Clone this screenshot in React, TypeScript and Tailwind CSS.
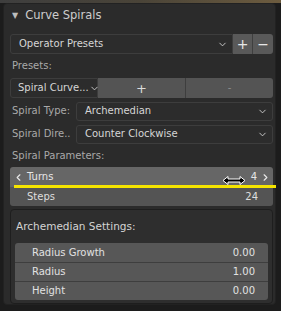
import { ChevronDown, ChevronLeft, ChevronRight } from 'lucide-react'

const font = { fontFamily: '"DejaVu Sans", "Liberation Sans", sans-serif' }

function Dropdown({ label, className = '' }: { label: string; className?: string }) {
    return (
        <div className={`flex items-center justify-between h-[19px] pl-2 pr-1 rounded-[3px] bg-[#2c2c2c] border border-[#3d3d3d] text-[#d6d6d6] ${className}`}>
            <span className="whitespace-nowrap">{label}</span>
            <ChevronDown size={11} strokeWidth={2} className="text-[#cfcfcf] shrink-0" />
        </div>
    )
}

function ValueRow({ label, value, top, bottom }: { label: string; value: string; top?: boolean; bottom?: boolean }) {
    return (
        <div className={`flex items-center justify-between h-[19px] pl-[17px] pr-[13px] bg-[#575757] text-[#e2e2e2] ${top ? 'rounded-t-[3px]' : 'border-t border-[#3e3e3e]'} ${bottom ? 'rounded-b-[3px]' : ''}`}>
            <span>{label}</span>
            <span>{value}</span>
        </div>
    )
}

export default function App() {
    return (
        <div className="w-[281px] h-[311px] overflow-hidden bg-[#1c1c1c] text-[10px] leading-none" style={font}>
            {/* top strip */}
            <div className="h-[3px] bg-gradient-to-r from-[#3e3e3e] via-[#4a4438] to-[#6d5c3f]" />

            {/* panel */}
            <div className="ml-[3px] mr-[5px] h-[302px] rounded-[4px] bg-[#2b2b2b] border border-[#222] flex flex-col">
                {/* header */}
                <div className="flex items-center h-[26px] pl-[8px] gap-[7px] text-[#cdcdcd] text-[11.5px]">
                    <span className="text-[8px] text-[#bdbdbd]">▼</span>
                    <span>Curve Spirals</span>
                </div>

                <div className="flex flex-col pl-[6px] pr-[2px] pt-[6px]">
                    {/* operator presets */}
                    <div className="flex h-[20px]">
                        <Dropdown label="Operator Presets" className="flex-1 h-[20px] rounded-r-none" />
                        <div className="w-[20px] flex items-center justify-center bg-[#595959] text-[#e6e6e6] text-[14px] border-r border-[#3f3f3f]">+</div>
                        <div className="w-[20px] flex items-center justify-center bg-[#595959] rounded-r-[3px] text-[#e6e6e6] text-[14px]">−</div>
                    </div>

                    <div className="h-[24px] flex items-center pl-[2px] text-[#a9a9a9]">Presets:</div>

                    <div className="flex h-[20px]">
                        <Dropdown label="Spiral Curve..." className="w-[88px] h-[20px] rounded-r-none pl-[7px]" />
                        <div className="flex-1 flex items-center justify-center bg-[#545454] text-[#dcdcdc] text-[13px] border-r border-[#3e3e3e]">+</div>
                        <div className="flex-1 flex items-center justify-center bg-[#545454] rounded-r-[3px] text-[#8c8c8c]">-</div>
                    </div>

                    <div className="flex items-center h-[20px] mt-[3px]">
                        <span className="w-[66px] pl-[2px] whitespace-nowrap text-[#a9a9a9]">Spiral Type:</span>
                        <Dropdown label="Archemedian" className="flex-1" />
                    </div>
                    <div className="flex items-center h-[20px] mt-[3px]">
                        <span className="w-[66px] pl-[2px] whitespace-nowrap text-[#a9a9a9]">Spiral Dire..</span>
                        <Dropdown label="Counter Clockwise" className="flex-1" />
                    </div>

                    <div className="h-[22px] flex items-center pl-[2px] mt-[1px] text-[#a9a9a9]">Spiral Parameters:</div>

                    {/* number fields */}
                    <div className="relative">
                        <div className="flex items-center h-[20px] bg-[#666666] rounded-t-[3px] text-[#e6e6e6] pl-[3px] pr-[2px]">
                            <ChevronLeft size={11} strokeWidth={2.5} className="text-[#e8e8e8]" />
                            <span className="ml-[3px] flex-1">Turns</span>
                            <span className="mr-[3px]">4</span>
                            <ChevronRight size={11} strokeWidth={2.5} className="text-[#e8e8e8]" />
                        </div>
                        <div className="flex items-center justify-between h-[19px] bg-[#545454] rounded-b-[3px] text-[#dedede] pl-[17px] pr-[15px]">
                            <span>Steps</span>
                            <span>24</span>
                        </div>
                        {/* yellow drag line + cursor */}
                        <div className="absolute left-[4px] right-[-3px] top-[18px] h-[3px] bg-[#f5e400]" />
                        <svg className="absolute left-[212px] top-[9px]" width="24" height="9" viewBox="0 0 24 9">
                            <path d="M1 4.5 L6 0.5 L6 3 L18 3 L18 0.5 L23 4.5 L18 8.5 L18 6 L6 6 L6 8.5 Z" fill="#000" stroke="#fff" strokeWidth="1" />
                        </svg>
                    </div>

                    {/* sub panel */}
                    <div className="mt-[3px] h-[95px] rounded-[4px] border border-[#1e1e1e] bg-[#2e2e2e] pl-[4px] pr-[4px]">
                        <div className="h-[33px] flex items-center pl-[1px] text-[#d4d4d4] text-[10.5px]">Archemedian Settings:</div>
                        <div className="flex flex-col">
                            <ValueRow label="Radius Growth" value="0.00" top />
                            <ValueRow label="Radius" value="1.00" />
                            <ValueRow label="Height" value="0.00" bottom />
                        </div>
                    </div>
                </div>
            </div>
        </div>
    )
}
